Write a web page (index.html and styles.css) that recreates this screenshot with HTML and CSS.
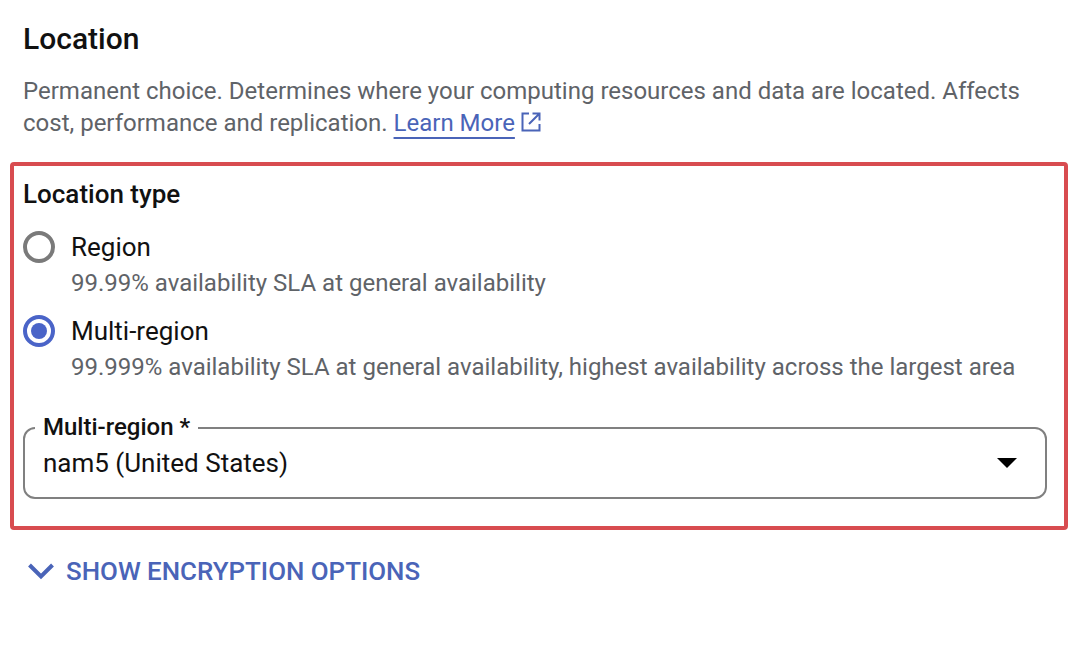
FILE: index.html
```html
<!DOCTYPE html>
<html lang="en">
<head>
<meta charset="utf-8">
<title>Location</title>
<link rel="stylesheet" href="styles.css">
</head>
<body>
<main class="page">
  <h2 class="title">Location</h2>
  <p class="intro">Permanent choice. Determines where your computing resources and data are located. Affects cost, performance and replication. <a class="link" href="#">Learn More</a><svg class="ext" viewBox="0 0 24 24" width="24" height="24" aria-hidden="true"><path d="M10 3.5H3.5v17h17V14M13.5 3.5h7v7M20.5 3.5 10 14" fill="none" stroke="#4a64b8" stroke-width="2"/></svg></p>
  <section class="box">
    <h3 class="type-title">Location type</h3>
    <div class="option">
      <span class="radio"></span>
      <div class="option-text">
        <div class="option-label">Region</div>
        <div class="option-desc">99.99% availability SLA at general availability</div>
      </div>
    </div>
    <div class="option">
      <span class="radio radio-on"></span>
      <div class="option-text">
        <div class="option-label">Multi-region</div>
        <div class="option-desc">99.999% availability SLA at general availability, highest availability across the largest area</div>
      </div>
    </div>
    <fieldset class="field">
      <legend class="field-legend">Multi-region *</legend>
      <div class="field-row">
        <span class="field-value">nam5 (United States)</span>
        <span class="arrow"></span>
      </div>
    </fieldset>
  </section>
  <div class="more">
    <svg class="chev" viewBox="0 0 28 18" width="28" height="18" aria-hidden="true"><path d="M2.5 3 14 14.5 25.5 3" fill="none" stroke="#4a64b8" stroke-width="4"/></svg>
    <span class="more-text">SHOW ENCRYPTION OPTIONS</span>
  </div>
</main>
</body>
</html>
```

FILE: styles.css
```css
* { box-sizing: border-box; }
html, body { margin: 0; padding: 0; background: #fff; }
body { width: 1075px; height: 655px; overflow: hidden; font-family: Roboto, "Liberation Sans", sans-serif; }
.page { padding: 20px 0 0 10px; }
.title { margin: 0 0 0 13px; font-size: 30px; line-height: 37px; font-weight: 500; color: #111; }
.intro { margin: 18px 50px 0 13px; font-size: 24px; line-height: 32px; color: #5f6368; }
.link { color: #4a64b8; text-decoration: underline 2px #4a64b8; text-underline-offset: 6px; }
.ext { vertical-align: -3px; margin-left: 4px; }
.box { width: 1058px; height: 368px; margin-top: 23px; border: 4px solid #d84c50; border-radius: 4px; padding: 12px 17px 0 9px; }
.type-title { margin: 0; font-size: 26px; line-height: 32px; font-weight: 500; color: #111; }
.option { display: flex; align-items: flex-start; gap: 16px; margin-top: 21px; }
.option + .option { margin-top: 12px; }
.radio { width: 32px; height: 32px; border: 4px solid #7a7a7a; border-radius: 50%; flex: none; display: flex; align-items: center; justify-content: center; }
.radio-on { border-color: #4a64c8; }
.radio-on::after { content: ""; width: 16px; height: 16px; border-radius: 50%; background: #4a64c8; }
.option-label { font-size: 26px; line-height: 32px; color: #111; }
.option-desc { font-size: 24px; line-height: 40px; color: #5f6368; }
.field { margin: 24px 0 0; padding: 0 10px; height: 88px; border: 2px solid #808080; border-radius: 12px; min-width: 0; }
.field-legend { padding: 0 8px 2px; font-size: 24px; line-height: 32px; font-weight: 500; color: #111; }
.field-row { display: flex; align-items: center; justify-content: space-between; height: 36px; padding: 0 18px 0 8px; }
.field-value { font-size: 26px; line-height: 36px; color: #111; }
.arrow { width: 0; height: 0; border-left: 10px solid transparent; border-right: 10px solid transparent; border-top: 10px solid #000; }
.more { display: flex; align-items: center; gap: 11px; margin: 24px 0 0 17px; }
.more-text { font-size: 25.9px; line-height: 34px; font-weight: 500; color: #4a64b8; }
```
